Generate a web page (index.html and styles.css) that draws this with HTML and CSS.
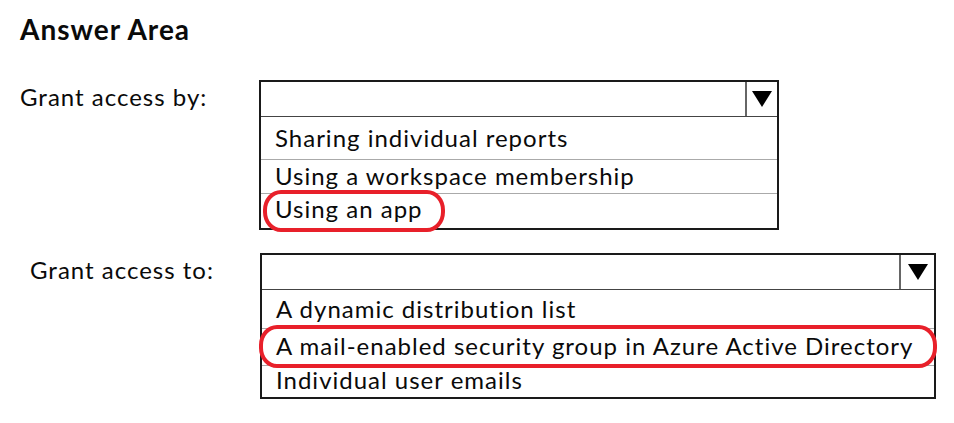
FILE: index.html
```html
<!DOCTYPE html>
<html>
<head>
<meta charset="utf-8">
<link rel="stylesheet" href="styles.css">
</head>
<body>
<div class="page">
  <h1 class="title">Answer Area</h1>

  <div class="question q1">
    <div class="label">Grant access by:</div>
    <div class="dropdown">
      <div class="head">
        <div class="head-fill"></div>
        <div class="arrow"><svg width="20" height="16" viewBox="0 0 20 16"><polygon points="0,0 20,0 10,16" fill="#000"/></svg></div>
      </div>
      <div class="opt first">Sharing individual reports</div>
      <div class="opt">Using a workspace membership</div>
      <div class="opt last">Using an app</div>
      <div class="mark mark1"></div>
    </div>
  </div>

  <div class="question q2">
    <div class="label">Grant access to:</div>
    <div class="dropdown">
      <div class="head">
        <div class="head-fill"></div>
        <div class="arrow"><svg width="20" height="16" viewBox="0 0 20 16"><polygon points="0,0 20,0 10,16" fill="#000"/></svg></div>
      </div>
      <div class="opt first">A dynamic distribution list</div>
      <div class="opt">A mail-enabled security group in Azure Active Directory</div>
      <div class="opt last">Individual user emails</div>
      <div class="mark mark2"></div>
    </div>
  </div>
</div>
</body>
</html>
```

FILE: styles.css
```css
html, body {
  margin: 0;
  padding: 0;
  background: #fff;
}
body {
  font-family: Lato, "Open Sans", "Liberation Sans", sans-serif;
  color: #0a0a0a;
}
.page {
  width: 954px;
  height: 423px;
  padding-top: 12px;
  box-sizing: border-box;
}
.title {
  margin: 0 0 0 20px;
  font-size: 28px;
  font-weight: 700;
  letter-spacing: 1px;
  line-height: 34px;
}
.question {
  display: flex;
  align-items: flex-start;
}
.q1 {
  margin-top: 34px;
}
.q2 {
  margin-top: 23px;
}
.label {
  font-size: 24px;
  letter-spacing: 1px;
  line-height: 34px;
}
.q1 .label {
  width: 239px;
  padding-left: 20px;
}
.q2 .label {
  width: 230px;
  padding-left: 30px;
}
.dropdown {
  position: relative;
  border: 2px solid #1a1a1a;
  box-sizing: border-box;
}
.q1 .dropdown {
  width: 520px;
}
.q2 .dropdown {
  width: 676px;
}
.head {
  display: flex;
  height: 34px;
  border-bottom: 1px solid #444;
}
.head-fill {
  flex: 1;
}
.arrow {
  width: 30px;
  border-left: 2px solid #666;
  display: flex;
  align-items: center;
  justify-content: center;
}
.q2 .arrow {
  width: 33px;
}
.opt {
  display: flex;
  align-items: center;
  padding-left: 14px;
  font-size: 24px;
  letter-spacing: 1px;
  height: 34px;
  border-top: 1px solid #aaa;
  box-sizing: border-box;
  padding-bottom: 3px;
}
.opt.first {
  border-top: none;
  height: 42px;
  padding-top: 2px;
  padding-bottom: 4px;
}
.q1 .opt.last {
  height: 35px;
  padding-bottom: 5px;
}
.q2 .opt.first {
  height: 38px;
  padding-top: 0;
  padding-bottom: 2px;
}
.q2 .opt {
  height: 37px;
}
.q2 .opt.last {
  height: 32px;
  padding-bottom: 4px;
}
.mark {
  position: absolute;
  border: 4px solid #e8202a;
  border-radius: 18px / 20px;
  box-sizing: border-box;
}
.mark1 {
  left: 2px;
  top: 108px;
  width: 182px;
  height: 42px;
}
.mark2 {
  left: -3px;
  top: 70px;
  width: 678px;
  height: 43px;
}
```
